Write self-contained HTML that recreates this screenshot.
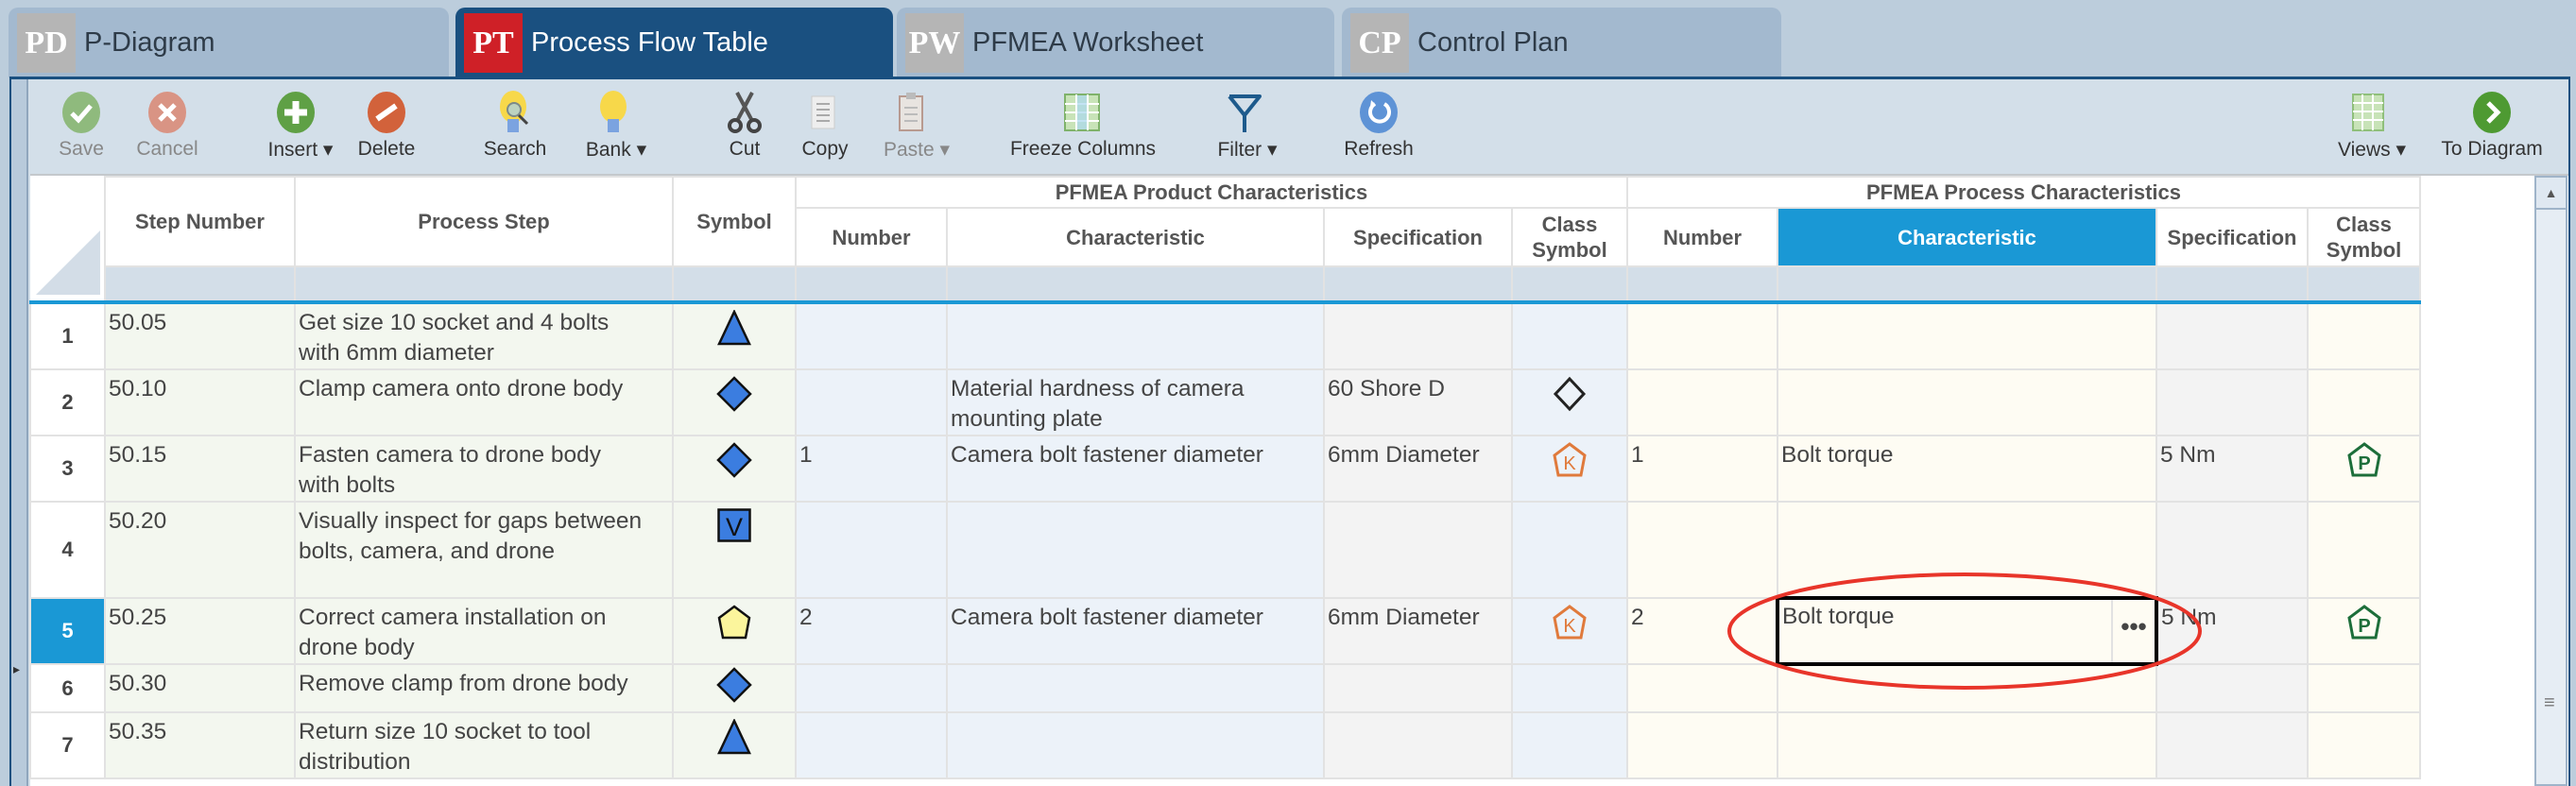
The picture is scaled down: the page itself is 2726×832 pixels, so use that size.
<!DOCTYPE html>
<html><head><meta charset="utf-8"><style>
*{margin:0;padding:0;box-sizing:border-box}
body{width:2726px;height:832px;background:#bccddc;position:relative;overflow:hidden;font-family:"Liberation Sans",Arial,sans-serif;color:#444}
.abs{position:absolute}
.tab{position:absolute;top:8px;height:74px;background:#a3b9cf;border-radius:10px 10px 0 0}
.tab.act{background:#1a5080}
.badge{position:absolute;left:9px;top:6px;width:62px;height:63px;background:#b5b5b5;color:#fff;font-family:"Liberation Serif",serif;font-weight:bold;font-size:34px;line-height:63px;text-align:center}
.tab .t{position:absolute;left:80px;top:0;line-height:74px;font-size:29px;color:#2e3b48}
.tab.act .t{color:#fff}
.lbl{position:absolute;top:146px;font-size:21px;color:#333;transform:translateX(-50%);white-space:nowrap}
.dis{color:#888}
.ico{position:absolute;top:96px;transform:translateX(-50%)}
table{position:absolute;left:31px;top:186px;border-collapse:collapse;table-layout:fixed}
td{border:2px solid #e2e2e2;vertical-align:top;font-size:24.5px;line-height:32px;padding:4px 3px 0 3px;color:#444;overflow:hidden;white-space:nowrap}
th{border:2px solid #e2e2e2;background:#fff;font-size:22px;font-weight:bold;color:#555;line-height:27px}
.f td{background:#d3dee8;padding:0}
.rn{background:#fff;font-weight:bold;font-size:22px;text-align:center;vertical-align:middle;padding:0}
.g{background:#f3f7ef}
.b{background:#ecf2f9}
.s{background:#f3f3f3}
.c{background:#fefcf3}
.sym{text-align:center;padding-top:6px}
</style></head><body>
<div class="tab" style="left:9px;width:466px"><div class="badge">PD</div><div class="t">P-Diagram</div></div>
<div class="tab act" style="left:482px;width:463px"><div class="badge" style="background:#cf2027">PT</div><div class="t">Process Flow Table</div></div>
<div class="tab" style="left:949px;width:463px"><div class="badge">PW</div><div class="t">PFMEA Worksheet</div></div>
<div class="tab" style="left:1420px;width:465px"><div class="badge">CP</div><div class="t">Control Plan</div></div>
<div class="abs" style="left:10px;top:81px;width:2710px;height:751px;background:#d3dfe9;border-top:3px solid #1a5080;border-left:2px solid #1a5080;border-right:2px solid #1a5080"></div>
<div class="abs" style="left:12px;top:84px;width:18px;height:748px;background:#b8cadb;border-right:2px solid #8fa6bd"></div>
<div class="abs" style="left:32px;top:184px;width:2686px;height:648px;background:#fff;border-top:2px solid #c4c8cc"></div>
<div class="abs" style="left:14px;top:700px;font-size:14px;color:#333">&#9656;</div>
<svg class="ico" style="left:86px" width="44" height="46"><ellipse cx="22" cy="23" rx="20" ry="22" fill="#8fba7d"/><path d="M12 24l7 7 13-15" stroke="#fff" stroke-width="5" fill="none"/></svg>
<svg class="ico" style="left:177px" width="44" height="46"><ellipse cx="22" cy="23" rx="20" ry="22" fill="#d99484"/><path d="M14 15l16 16M30 15l-16 16" stroke="#fff" stroke-width="5"/></svg>
<svg class="ico" style="left:313px" width="44" height="46"><ellipse cx="22" cy="23" rx="20" ry="22" fill="#5fa045"/><path d="M22 11v24M10 23h24" stroke="#fff" stroke-width="7"/></svg>
<svg class="ico" style="left:409px" width="44" height="46"><ellipse cx="22" cy="23" rx="20" ry="22" fill="#d2623b"/><path d="M12 30l20-14" stroke="#fff" stroke-width="6"/></svg>
<svg class="ico" style="left:545px" width="44" height="50"><ellipse cx="20" cy="17" rx="14" ry="17" fill="#f7d84a"/><rect x="14" y="30" width="12" height="14" fill="#7ba3e0"/><circle cx="21" cy="20" r="7" fill="#bcd2c0" stroke="#7c8a8a" stroke-width="2"/><path d="M26 26l9 9" stroke="#444" stroke-width="3"/></svg>
<svg class="ico" style="left:649px" width="36" height="50"><ellipse cx="18" cy="17" rx="14" ry="17" fill="#f7d84a"/><rect x="12" y="30" width="12" height="14" fill="#7ba3e0"/></svg>
<svg class="ico" style="left:788px" width="40" height="46"><path d="M12 2l16 30M28 2l-16 30" stroke="#555" stroke-width="4"/><circle cx="10" cy="37" r="6" fill="none" stroke="#444" stroke-width="4"/><circle cx="30" cy="37" r="6" fill="none" stroke="#444" stroke-width="4"/></svg>
<svg class="ico" style="left:873px" width="40" height="46"><rect x="6" y="6" width="24" height="34" fill="#eee" stroke="#ccc"/><path d="M11 14h14M11 20h14M11 26h14M11 32h14" stroke="#aaa" stroke-width="2"/></svg>
<svg class="ico" style="left:964px" width="40" height="46"><rect x="8" y="6" width="24" height="36" fill="#e8e4e0" stroke="#b89a90" stroke-width="2"/><rect x="15" y="2" width="10" height="7" fill="#bbb"/><path d="M13 18h14M13 25h14M13 32h14" stroke="#bbb" stroke-width="2"/></svg>
<svg class="ico" style="left:1146px" width="42" height="46"><rect x="2" y="4" width="36" height="38" fill="#c8e3b8" stroke="#7fb26a" stroke-width="2"/><path d="M14 4v38M26 4v38M2 14h36M2 23h36M2 32h36" stroke="#fff" stroke-width="2"/><rect x="15" y="5" width="10" height="36" fill="#a9d7ee" opacity=".7"/></svg>
<svg class="ico" style="left:1317px" width="40" height="48"><path d="M4 6h32L20 26v18" stroke="#1d5a8c" stroke-width="4" fill="none" stroke-linejoin="round"/><path d="M4 6L20 26" stroke="#1d5a8c" stroke-width="4"/></svg>
<svg class="ico" style="left:1459px" width="44" height="46"><ellipse cx="22" cy="23" rx="20" ry="22" fill="#5e93d6"/><path d="M28 14a10 10 0 1 1-10 0" stroke="#fff" stroke-width="4" fill="none"/><path d="M14 10l5 5-6 2" fill="#fff"/></svg>
<svg class="ico" style="left:2506px" width="40" height="46"><rect x="4" y="4" width="32" height="38" fill="#c8e3b8" stroke="#8fbf7a" stroke-width="2"/><path d="M14 4v38M25 4v38M4 13h32M4 22h32M4 31h32" stroke="#fff" stroke-width="2"/></svg>
<svg class="ico" style="left:2637px" width="44" height="46"><ellipse cx="22" cy="23" rx="20" ry="22" fill="#4e9a32"/><path d="M18 13l10 10-10 10" stroke="#fff" stroke-width="5" fill="none"/></svg>
<div class="lbl dis" style="left:86px">Save</div>
<div class="lbl dis" style="left:177px">Cancel</div>
<div class="lbl" style="left:318px">Insert &#9662;</div>
<div class="lbl" style="left:409px">Delete</div>
<div class="lbl" style="left:545px">Search</div>
<div class="lbl" style="left:652px">Bank &#9662;</div>
<div class="lbl" style="left:788px">Cut</div>
<div class="lbl" style="left:873px">Copy</div>
<div class="lbl dis" style="left:970px">Paste &#9662;</div>
<div class="lbl" style="left:1146px">Freeze Columns</div>
<div class="lbl" style="left:1320px">Filter &#9662;</div>
<div class="lbl" style="left:1459px">Refresh</div>
<div class="lbl" style="left:2510px">Views &#9662;</div>
<div class="lbl" style="left:2637px">To Diagram</div>
<table>
<colgroup><col style="width:79px"><col style="width:201px"><col style="width:400px"><col style="width:130px"><col style="width:160px"><col style="width:399px"><col style="width:199px"><col style="width:122px"><col style="width:159px"><col style="width:401px"><col style="width:160px"><col style="width:119px"></colgroup>
<tr style="height:33px"><th rowspan="3" style="border-top:0;border-left:0;position:relative;background:#fff"><svg style="position:absolute;left:4px;bottom:4px" width="72" height="72"><path d="M70 2V70H2Z" fill="#d3dde7"/></svg></th><th rowspan="2">Step Number</th><th rowspan="2">Process Step</th><th rowspan="2">Symbol</th><th colspan="4">PFMEA Product Characteristics</th><th colspan="4">PFMEA Process Characteristics</th></tr>
<tr style="height:62px"><th>Number</th><th>Characteristic</th><th>Specification</th><th>Class<br>Symbol</th><th>Number</th><th style="background:#1a98d5;color:#fff">Characteristic</th><th>Specification</th><th>Class<br>Symbol</th></tr>
<tr class="f" style="height:38px"><td></td><td></td><td></td><td></td><td></td><td></td><td></td><td></td><td></td><td></td><td></td></tr>
<tr style="height:70px;border-top:4px solid #1a98d5"><td class="rn">1</td><td class="g">50.05</td><td class="g">Get size 10 socket and 4 bolts<br>with 6mm diameter</td><td class="g sym"><svg width="36" height="38"><path d="M18 2L34 36H2Z" fill="#3b7de0" stroke="#111" stroke-width="2.5"/></svg></td><td class="b"></td><td class="b"></td><td class="s"></td><td class="b"></td><td class="c"></td><td class="c"></td><td class="s"></td><td class="c"></td></tr>
<tr style="height:70px"><td class="rn">2</td><td class="g">50.10</td><td class="g">Clamp camera onto drone body</td><td class="g sym"><svg width="38" height="38"><path d="M19 2L36 19 19 36 2 19Z" fill="#3b7de0" stroke="#111" stroke-width="2.5"/></svg></td><td class="b"></td><td class="b">Material hardness of camera<br>mounting plate</td><td class="s">60 Shore D</td><td class="b sym"><svg width="38" height="38"><path d="M19 3L34 19 19 35 4 19Z" fill="none" stroke="#222" stroke-width="3"/></svg></td><td class="c"></td><td class="c"></td><td class="s"></td><td class="c"></td></tr>
<tr style="height:70px"><td class="rn">3</td><td class="g">50.15</td><td class="g">Fasten camera to drone body<br>with bolts</td><td class="g sym"><svg width="38" height="38"><path d="M19 2L36 19 19 36 2 19Z" fill="#3b7de0" stroke="#111" stroke-width="2.5"/></svg></td><td class="b">1</td><td class="b">Camera bolt fastener diameter</td><td class="s">6mm Diameter</td><td class="b sym"><svg width="38" height="38"><path d="M19 2L35 14 31 35H7L3 14Z" fill="none" stroke="#e07a3c" stroke-width="3"/><text x="19" y="29" font-size="20" text-anchor="middle" fill="#e07a3c" font-family="Liberation Sans">K</text></svg></td><td class="c">1</td><td class="c">Bolt torque</td><td class="s">5 Nm</td><td class="c sym"><svg width="38" height="38"><path d="M19 2L35 14 31 35H7L3 14Z" fill="none" stroke="#1d6e3a" stroke-width="3"/><text x="19" y="29" font-size="20" font-weight="bold" text-anchor="middle" fill="#1d6e3a" font-family="Liberation Sans">P</text></svg></td></tr>
<tr style="height:102px"><td class="rn">4</td><td class="g">50.20</td><td class="g">Visually inspect for gaps between<br>bolts, camera, and drone</td><td class="g sym"><svg width="36" height="36"><rect x="1.5" y="1.5" width="33" height="33" fill="#3b7de0" stroke="#111" stroke-width="2.5"/><text x="18" y="29" font-size="27" text-anchor="middle" fill="#111" font-family="Liberation Sans">V</text></svg></td><td class="b"></td><td class="b"></td><td class="s"></td><td class="b"></td><td class="c"></td><td class="c"></td><td class="s"></td><td class="c"></td></tr>
<tr style="height:70px"><td class="rn" style="background:#1a98d5;color:#fff">5</td><td class="g">50.25</td><td class="g">Correct camera installation on<br>drone body</td><td class="g sym"><svg width="38" height="38"><path d="M19 2L35 14 31 35H7L3 14Z" fill="#fbf59c" stroke="#111" stroke-width="2.5"/></svg></td><td class="b">2</td><td class="b">Camera bolt fastener diameter</td><td class="s">6mm Diameter</td><td class="b sym"><svg width="38" height="38"><path d="M19 2L35 14 31 35H7L3 14Z" fill="none" stroke="#e07a3c" stroke-width="3"/><text x="19" y="29" font-size="20" text-anchor="middle" fill="#e07a3c" font-family="Liberation Sans">K</text></svg></td><td class="c">2</td><td class="c" style="border:4px solid #000;position:relative;padding-top:2px">Bolt torque<div style="position:absolute;right:0;top:0;width:46px;height:100%;border-left:2px solid #e2e2e2;font-size:26px;font-weight:bold;text-align:center;line-height:56px">&#8226;&#8226;&#8226;</div></td><td class="s">5 Nm</td><td class="c sym"><svg width="38" height="38"><path d="M19 2L35 14 31 35H7L3 14Z" fill="none" stroke="#1d6e3a" stroke-width="3"/><text x="19" y="29" font-size="20" font-weight="bold" text-anchor="middle" fill="#1d6e3a" font-family="Liberation Sans">P</text></svg></td></tr>
<tr style="height:42px"><td class="rn">6</td><td class="g">50.30</td><td class="g">Remove clamp from drone body</td><td class="g sym" style="padding-top:2px"><svg width="38" height="38"><path d="M19 2L36 19 19 36 2 19Z" fill="#3b7de0" stroke="#111" stroke-width="2.5"/></svg></td><td class="b"></td><td class="b"></td><td class="s"></td><td class="b"></td><td class="c"></td><td class="c"></td><td class="s"></td><td class="c"></td></tr>
<tr style="height:69px"><td class="rn">7</td><td class="g">50.35</td><td class="g">Return size 10 socket to tool<br>distribution</td><td class="g sym"><svg width="36" height="38"><path d="M18 2L34 36H2Z" fill="#3b7de0" stroke="#111" stroke-width="2.5"/></svg></td><td class="b"></td><td class="b"></td><td class="s"></td><td class="b"></td><td class="c"></td><td class="c"></td><td class="s"></td><td class="c"></td></tr>
</table>
<svg class="abs" style="left:1820px;top:600px" width="520" height="140"><ellipse cx="259" cy="68" rx="249" ry="60" fill="none" stroke="#e8352a" stroke-width="4"/></svg>
<div class="abs" style="left:2682px;top:186px;width:35px;height:646px;background:#e6edf4;border:2px solid #9fb4c9"></div>
<div class="abs" style="left:2682px;top:186px;width:35px;height:36px;background:#dfe8f1;border:2px solid #9fb4c9;font-size:14px;text-align:center;line-height:32px;color:#555">&#9650;</div>
<div class="abs" style="left:2692px;top:733px;font-size:20px;color:#777">&#8801;</div>
</body></html>
